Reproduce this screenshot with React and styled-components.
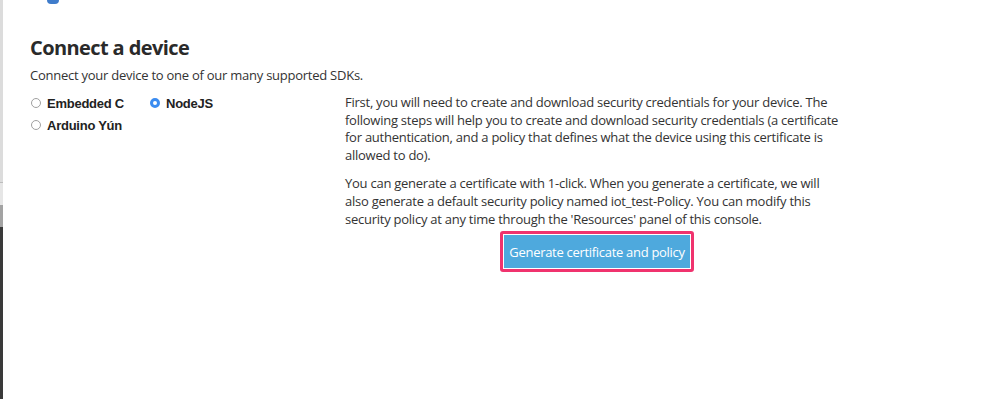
import React from 'react'
import styled, { createGlobalStyle } from 'styled-components'

const GlobalStyle = createGlobalStyle`
  html, body {
    margin: 0;
    padding: 0;
    background: #fff;
  }
  body {
    font-family: 'Open Sans', 'Noto Sans', sans-serif;
    color: #333;
  }
`

const Page = styled.div`
  display: flex;
  height: 399px;
  overflow: hidden;
`

const EdgeStrip = styled.div`
  width: 3px;
  flex: none;
  display: flex;
  flex-direction: column;
`

const EdgePart = styled.div`
  height: ${(p) => p.h}px;
  flex: ${(p) => (p.grow ? 1 : 'none')};
  background: ${(p) => p.color};
`

const Content = styled.main`
  flex: 1;
  padding: 0 0 0 27px;
`

const LogoTip = styled.div`
  width: 12px;
  height: 4px;
  margin-left: 17px;
  background: #3f7ccb;
  border-radius: 0 0 6px 6px;
`

const Title = styled.h1`
  margin: 30px 0 0;
  font-size: 20px;
  font-weight: 700;
  line-height: 28px;
  color: #2a2a2a;
  letter-spacing: -0.6px;
`

const Lead = styled.p`
  margin: 4px 0 0;
  font-size: 13px;
  line-height: 18px;
  letter-spacing: -0.25px;
`

const Columns = styled.div`
  display: flex;
  margin-top: 9px;
`

const SdkList = styled.div`
  width: 315px;
  flex: none;
  display: grid;
  grid-template-columns: 119px auto;
  grid-auto-rows: 18px;
  row-gap: 4px;
  align-content: start;
  padding-top: 1px;
`

const Option = styled.label`
  display: flex;
  align-items: center;
  gap: 6px;
  font-family: 'Liberation Sans', Arial, sans-serif;
  font-weight: 700;
  font-size: 13px;
  letter-spacing: -0.25px;
  color: #222;
`

const Radio = styled.span`
  width: 10px;
  height: 10px;
  border-radius: 50%;
  box-sizing: border-box;
  margin-left: 1px;
  border: ${(p) => (p.checked ? '3px solid #3b8cf0' : '1px solid #a0a0a0')};
  background: #fff;
`

const Details = styled.div`
  width: 505px;
  padding-top: 1px;
`

const Para = styled.p`
  margin: 0 0 11px;
  font-size: 13px;
  line-height: 17.6px;
  letter-spacing: -0.25px;
  color: #333;
`

const ButtonRow = styled.div`
  display: flex;
  justify-content: center;
  padding-right: 1px;
  margin-top: -8px;
`

const Highlight = styled.div`
  border: 3px solid #f0336e;
  border-radius: 3px;
  padding: 1px;
`

const Button = styled.button`
  background: #4ea9dd;
  border: none;
  color: #fff;
  font-family: 'Open Sans', 'Noto Sans', sans-serif;
  font-size: 13px;
  letter-spacing: -0.3px;
  height: 33px;
  padding: 0 5px;
  cursor: pointer;
`

const sdks = [
  { name: 'Embedded C' },
  { name: 'NodeJS', checked: true },
  { name: 'Arduino Yún' },
]

export default function App() {
  return (
    <>
      <GlobalStyle />
      <Page>
        <EdgeStrip>
          <EdgePart h={182} color="#dcdcdc" />
          <EdgePart h={1} color="#bdbdbd" />
          <EdgePart h={22} color="#e6e6e6" />
          <EdgePart h={22} color="#a3a3a3" />
          <EdgePart grow color="#3a3a3a" />
        </EdgeStrip>
        <Content>
          <LogoTip />
          <Title>Connect a device</Title>
          <Lead>Connect your device to one of our many supported SDKs.</Lead>
          <Columns>
            <SdkList>
              {sdks.map((s) => (
                <Option key={s.name}>
                  <Radio checked={s.checked} />
                  {s.name}
                </Option>
              ))}
            </SdkList>
            <Details>
              <Para>
                First, you will need to create and download security credentials for your
                device. The following steps will help you to create and download security
                credentials (a certificate for authentication, and a policy that defines what
                the device using this certificate is allowed to do).
              </Para>
              <Para>
                You can generate a certificate with 1-click. When you generate a certificate,
                we will
                <br />
                also generate a default security policy named iot_test-Policy. You can
                modify this security policy at any time through the 'Resources' panel of this
                console.
              </Para>
              <ButtonRow>
                <Highlight>
                  <Button>Generate certificate and policy</Button>
                </Highlight>
              </ButtonRow>
            </Details>
          </Columns>
        </Content>
      </Page>
    </>
  )
}
